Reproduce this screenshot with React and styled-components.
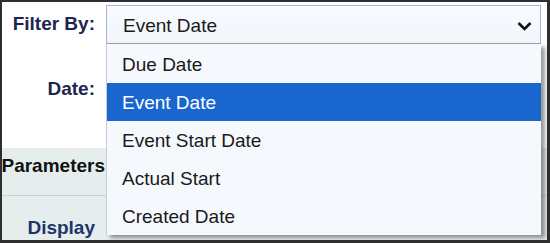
import React from 'react';
import styled, { createGlobalStyle } from 'styled-components';

const GlobalStyle = createGlobalStyle`
  html, body {
    margin: 0;
    padding: 0;
    background: #ffffff;
  }
  body {
    font-family: "Liberation Sans", Arial, sans-serif;
  }
`;

const Frame = styled.div`
  box-sizing: border-box;
  width: 550px;
  height: 243px;
  border: 2px solid #2e2e2e;
  border-right-width: 3px;
  border-bottom-width: 3px;
  background: #ffffff;
  overflow: hidden;
  display: grid;
  grid-template-columns: 104px 1fr;
  grid-template-rows: 44px 102px 48px 1fr;
`;

const Label = styled.div`
  display: flex;
  align-items: ${(p) => (p.top ? 'flex-start' : 'center')};
  justify-content: flex-end;
  padding-right: 11px;
  padding-top: ${(p) => p.pt || 0}px;
  font-size: 19px;
  font-weight: bold;
  color: ${(p) => p.color || '#1d2650'};
  white-space: nowrap;
`;

const Cell = styled.div`
  position: relative;
  padding: 3px 6px 0 0;
`;

const Band = styled.div`
  grid-column: 1 / -1;
  background: #e5eded;
  border-bottom: ${(p) => (p.divider ? '1px solid #c9d3d3' : 'none')};
`;

const BandLabel = styled.div`
  width: 104px;
  display: flex;
  justify-content: flex-end;
  padding-right: ${(p) => p.pr || 0}px;
  padding-top: ${(p) => p.pt || 0}px;
  box-sizing: border-box;
  font-size: 19px;
  font-weight: bold;
  color: ${(p) => p.color};
  white-space: nowrap;
`;

const Select = styled.div`
  box-sizing: border-box;
  height: 39px;
  border: 1px solid #aab4d8;
  border-bottom: 1px solid #a3a3a3;
  background: linear-gradient(#f7fafe, #f2f6fb);
  display: flex;
  align-items: center;
  justify-content: space-between;
  padding: 2px 8px 0 16px;
  font-size: 19px;
  color: #1a1a1a;
`;

const Menu = styled.ul`
  position: absolute;
  top: 42px;
  left: 0;
  right: 6px;
  margin: 0;
  padding: 0;
  list-style: none;
  background: #f5f9fd;
  border-left: 1px solid #c8ccd4;
  box-shadow: 4px 3px 4px rgba(0, 0, 0, 0.4);
  z-index: 2;
`;

const Item = styled.li`
  height: 38px;
  display: flex;
  align-items: center;
  padding-left: 15px;
  padding-top: 2px;
  box-sizing: border-box;
  font-size: 19px;
  color: ${(p) => (p.active ? '#ffffff' : '#1a1a1a')};
  background: ${(p) => (p.active ? '#1a66cf' : 'transparent')};
  margin-top: ${(p) => (p.first ? 1 : 0)}px;
`;

const Chevron = () => (
  <svg width="15" height="10" viewBox="0 0 15 10">
    <path d="M1.5 2 L7.5 8 L13.5 2" fill="none" stroke="#111" strokeWidth="2.6" />
  </svg>
);

const options = ['Due Date', 'Event Date', 'Event Start Date', 'Actual Start', 'Created Date'];

export default function App() {
  return (
    <>
      <GlobalStyle />
      <Frame>
        <Label>Filter By:</Label>
        <Cell>
          <Select>
            <span>Event Date</span>
            <Chevron />
          </Select>
          <Menu>
            {options.map((o, i) => (
              <Item key={o} first={i === 0} active={o === 'Event Date'}>
                {o}
              </Item>
            ))}
          </Menu>
        </Cell>
        <Label top pt={32}>Date:</Label>
        <div />
        <Band divider>
          <BandLabel color="#111111" pr={1} pt={7}>Parameters</BandLabel>
        </Band>
        <Band>
          <BandLabel color="#1f3468" pr={11} pt={21}>Display</BandLabel>
        </Band>
      </Frame>
    </>
  );
}
